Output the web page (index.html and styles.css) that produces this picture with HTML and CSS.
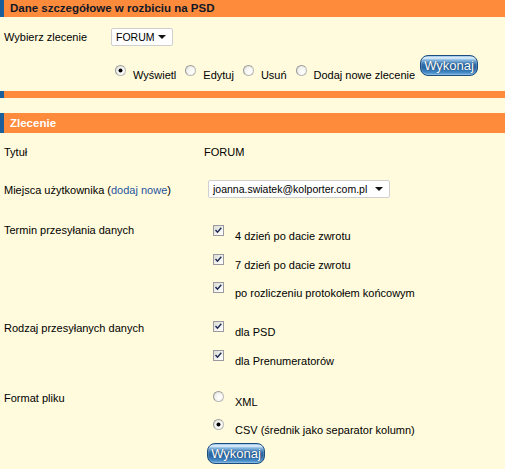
FILE: index.html
```html
<!DOCTYPE html>
<html lang="pl">
<head>
<meta charset="utf-8">
<title>Dane szczegółowe w rozbiciu na PSD</title>
<link rel="stylesheet" href="styles.css">
</head>
<body>
<div class="bar head1">Dane szczegółowe w rozbiciu na PSD</div>

<div class="pick">
  <span class="pick-label">Wybierz zlecenie</span>
  <span class="sel sel-small">FORUM</span>
</div>

<div class="actions">
  <span class="radio on"></span><span class="opt">Wyświetl</span>
  <span class="radio"></span><span class="opt">Edytuj</span>
  <span class="radio"></span><span class="opt">Usuń</span>
  <span class="radio"></span><span class="opt">Dodaj nowe zlecenie</span>
  <button class="btn btn-top" type="button">Wykonaj</button>
</div>

<div class="bar thin"></div>
<div class="bar head2">Zlecenie</div>

<div class="form">
  <div class="frow r-title">
    <div class="lbl">Tytuł</div>
    <div class="val">FORUM</div>
  </div>
  <div class="frow r-place">
    <div class="lbl l-place">Miejsca użytkownika (<a href="#" class="link">dodaj nowe</a>)</div>
    <div class="val"><span class="sel sel-wide">joanna.swiatek@kolporter.com.pl</span></div>
  </div>
  <div class="frow r-term">
    <div class="lbl">Termin przesyłania danych</div>
    <div class="opts o-term">
      <div class="item"><span class="cb"><svg viewBox="0 0 11 11" width="11" height="11"><polyline points="2.5,5 4.5,7.2 8.3,2.8" fill="none" stroke="#1b2a55" stroke-width="1.4"/></svg></span><span class="itxt">4 dzień po dacie zwrotu</span></div>
      <div class="item"><span class="cb"><svg viewBox="0 0 11 11" width="11" height="11"><polyline points="2.5,5 4.5,7.2 8.3,2.8" fill="none" stroke="#1b2a55" stroke-width="1.4"/></svg></span><span class="itxt">7 dzień po dacie zwrotu</span></div>
      <div class="item"><span class="cb"><svg viewBox="0 0 11 11" width="11" height="11"><polyline points="2.5,5 4.5,7.2 8.3,2.8" fill="none" stroke="#1b2a55" stroke-width="1.4"/></svg></span><span class="itxt">po rozliczeniu protokołem końcowym</span></div>
    </div>
  </div>
  <div class="frow r-kind">
    <div class="lbl l-kind">Rodzaj przesyłanych danych</div>
    <div class="opts">
      <div class="item"><span class="cb"><svg viewBox="0 0 11 11" width="11" height="11"><polyline points="2.5,5 4.5,7.2 8.3,2.8" fill="none" stroke="#1b2a55" stroke-width="1.4"/></svg></span><span class="itxt">dla PSD</span></div>
      <div class="item"><span class="cb"><svg viewBox="0 0 11 11" width="11" height="11"><polyline points="2.5,5 4.5,7.2 8.3,2.8" fill="none" stroke="#1b2a55" stroke-width="1.4"/></svg></span><span class="itxt">dla Prenumeratorów</span></div>
    </div>
  </div>
  <div class="frow r-format">
    <div class="lbl l-format">Format pliku</div>
    <div class="opts">
      <div class="item"><span class="radio"></span><span class="itxt">XML</span></div>
      <div class="item"><span class="radio on"></span><span class="itxt">CSV (średnik jako separator kolumn)</span></div>
      <button class="btn btn-bottom" type="button">Wykonaj</button>
    </div>
  </div>
</div>
</body>
</html>
```

FILE: styles.css
```css
html, body {
  margin: 0;
  padding: 0;
  background: #fffbdc;
}
body {
  font-family: "Liberation Sans", Arial, sans-serif;
  font-size: 11px;
  line-height: 13px;
  color: #000;
  width: 505px;
  height: 469px;
  overflow: hidden;
}

.bar {
  background: #fe8b3b;
  border-left: 4px solid #1c5d9c;
  box-sizing: border-box;
}
.head1 {
  height: 17px;
  line-height: 17px;
  padding-left: 6px;
  font-weight: bold;
  font-size: 11.5px;
  color: #111827;
}
.thin {
  height: 7px;
  margin-top: 9px;
}
.head2 {
  height: 20px;
  line-height: 20px;
  margin-top: 15px;
  padding-left: 6px;
  font-weight: bold;
  font-size: 11.5px;
  color: #fff;
}

/* select look-alike */
.sel {
  display: flex;
  align-items: center;
  box-sizing: border-box;
  height: 18px;
  background: #fff;
  border: 1px solid #cfcfcf;
  border-radius: 2px;
  padding-left: 4px;
  position: relative;
  color: #000;
  font-size: 10.5px;
}
.sel::after {
  content: "";
  position: absolute;
  right: 6px;
  top: 6px;
  border-left: 4px solid transparent;
  border-right: 4px solid transparent;
  border-top: 4px solid #111;
}
.sel-small { width: 62px; }
.sel-wide { width: 182px; margin-left: 4px; }

.pick {
  display: flex;
  align-items: flex-start;
  padding-left: 4px;
  margin-top: 11px;
}
.pick-label {
  width: 107px;
  margin-top: 3px;
}

/* radio & checkbox */
.radio {
  flex: none;
  box-sizing: border-box;
  width: 11px;
  height: 11px;
  border-radius: 50%;
  border: 1px solid #b9b9b9;
  border-top-color: #9a9a9a;
  border-left-color: #9a9a9a;
  background: radial-gradient(circle at 65% 65%, #ffffff 0%, #f4f4f0 50%, #d6d6d0 100%);
  position: relative;
}
.radio.on::after {
  content: "";
  position: absolute;
  left: 3px;
  top: 3px;
  width: 3px;
  height: 3px;
  border-radius: 50%;
  background: #000;
  box-shadow: 0 0 0 0.5px #000;
}
.cb {
  flex: none;
  box-sizing: border-box;
  width: 11px;
  height: 11px;
  border: 1px solid #9a9aa0;
  background: linear-gradient(135deg, #dcdcd6 0%, #f4f4f0 60%, #ffffff 100%);
  display: flex;
}
.cb svg {
  margin: -1px;
}

.actions {
  display: flex;
  align-items: flex-start;
  padding-left: 115px;
  margin-top: 9px;
}
.actions .radio {
  margin-top: 10px;
  margin-left: 9px;
}
.actions .radio:first-child { margin-left: 0; }
.actions .opt {
  margin-top: 14px;
  margin-left: 7px;
}

/* glossy button */
.btn {
  font-family: "Liberation Sans", Arial, sans-serif;
  font-size: 13px;
  line-height: 18px;
  color: #fff;
  height: 21px;
  width: 58px;
  padding: 0;
  border: 1px solid #1c4d7e;
  border-radius: 8px;
  background: linear-gradient(#7eb3df 0%, #e9f5ff 10%, #8fbde3 20%, #2f6eaa 45%, #2a65a0 60%, #3f84c2 85%, #79b4e2 100%);
  text-shadow: 0 0 1px #0d2f55;
  box-shadow: inset 0 0 0 1px rgba(255,255,255,0.15);
  cursor: pointer;
}
.btn-top {
  margin-left: 5px;
}
.btn-bottom {
  margin-top: -4.5px;
  margin-left: -6px;
}

/* form */
.form {
  padding-left: 4px;
}
.frow {
  display: grid;
  grid-template-columns: 200px 1fr;
  align-items: start;
}
.r-title { margin-top: 13px; }
.r-place { margin-top: 21px; }
.l-place { margin-top: 4px; }
.r-term { margin-top: 26px; }
.o-term { margin-top: 1px; }
.r-kind { margin-top: 21px; }
.l-kind { margin-top: 1px; }
.r-format { margin-top: 23px; }
.l-format { margin-top: 1px; }

.link {
  color: #1f55a0;
  text-decoration: none;
}

.opts {
  display: flex;
  flex-direction: column;
  align-items: flex-start;
  gap: 10.5px;
  padding-left: 9px;
}
.item {
  display: flex;
  align-items: flex-start;
}
.itxt {
  margin-top: 5px;
  margin-left: 11px;
}
```
